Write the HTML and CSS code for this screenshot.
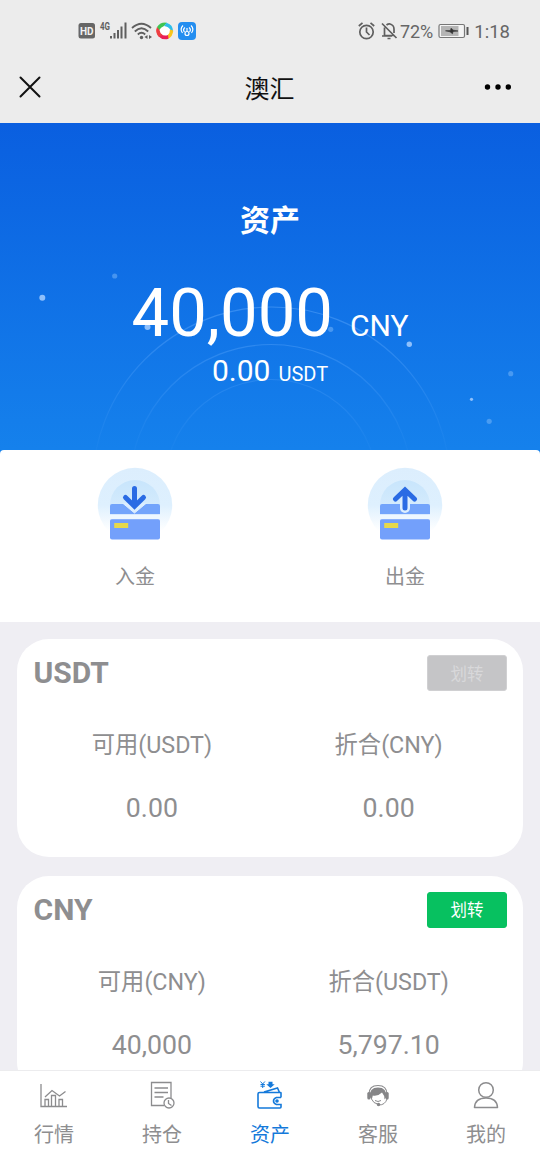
FILE: index.html
```html
<!DOCTYPE html>
<html lang="zh-CN">
<head>
<meta charset="utf-8">
<title>澳汇</title>
<link rel="stylesheet" href="styles.css">
</head>
<body>
<div class="screen">
  <header class="status">
    <div class="status-left">
      <svg width="118" height="22" viewBox="0 0 118 22">
        <rect x="0.500" y="3" width="16.500" height="15.500" rx="2.500" fill="#666"/>
        <text x="8.800" y="14.600" class="hd">HD</text>
        <text x="22" y="10" class="g4" textLength="10" lengthAdjust="spacingAndGlyphs">4G</text>
        <g fill="#5f5f5f"><rect x="32" y="16" width="2" height="2.500"/><rect x="35.500" y="13" width="2" height="5.500"/><rect x="39" y="10" width="2" height="8.500"/><rect x="42.500" y="6.500" width="2" height="12"/><rect x="46.500" y="2.500" width="2" height="16"/></g>
        <g fill="none" stroke="#5f5f5f" stroke-width="1.800"><path d="M54 8Q63.500-.5 73 8M56.800 11.500Q63.500 5 70.200 11.500M59.800 14.500Q63.500 11 67.200 14.500"/></g>
        <circle cx="63.500" cy="17.500" r="1.700" fill="#5f5f5f"/>
        <path d="M66.500 17l3-2v4zM74 17l-3-2v4z" fill="#5f5f5f"/>
        <circle cx="86.700" cy="11" r="8.500" fill="#fff"/>
        <path d="M79 7Q83 1.500 89 2.800L86 6Q83 7 80.500 11z" fill="#3fc453"/>
        <path d="M88.500 2.700Q95 4.500 95.200 11.500L92.500 10Q90.500 6.500 86 6z" fill="#2ebde9"/>
        <path d="M95.200 10.500Q95 17 89.500 19L89.800 15Q92 13.500 92 9.500z" fill="#f8c51c"/>
        <path d="M90.500 18.700Q84.500 20.500 80.500 16.500L83 14Q86 16.500 90 15z" fill="#e91e55"/>
        <path d="M81 17Q76.500 12.500 79 7L81.500 10Q82 13.500 84.500 15z" fill="#ed3f42"/>
        <rect x="100" y="2" width="18" height="18" rx="4" fill="#248ef0"/>
        <g fill="none" stroke="#fff" stroke-width="1.200"><circle cx="109" cy="13.500" r="2"/><path d="M106.500 12Q104.500 9.500 107 7.500M111.500 12Q113.500 9.500 111 7.500M104.500 13Q101.500 9 105 5.500M113.500 13Q116.500 9 113 5.500M109 8v3"/></g>
      </svg>
    </div>
    <div class="status-right">
      <svg width="40" height="22" viewBox="0 0 40 22" fill="none" stroke="#5f5f5f" stroke-width="1.700">
        <circle cx="8.500" cy="12" r="6.700"/><path d="M8.500 7.500V12l3 3M.8 6L4.500 2.800M16.200 6L12.500 2.800"/>
        <path d="M24 3.500L38.500 18M26.500 7.500v8h10M24 16h10M28.500 5Q30 3.800 31.500 3.800Q36 5 36 9v4M29.500 18.500h3"/>
      </svg>
      <span class="pct">72%</span>
      <svg width="32" height="16" viewBox="0 0 32 16">
        <rect x="1" y="1.500" width="25.500" height="13" rx="1.500" fill="#f4f4f4" stroke="#777" stroke-width="1.200"/>
        <rect x="3" y="3" width="17.500" height="10" fill="#b5b5b5"/>
        <path d="M7.500 7.800l5 -.3.500-2.300 2.500 2 4.500.8-5 .5-.5 2.300-2.500-2z" fill="#333" stroke="#333" stroke-width=".6"/>
        <rect x="28.500" y="4" width="2" height="8" fill="#555"/>
      </svg>
      <span class="time">1:18</span>
    </div>
  </header>
  <nav class="titlebar">
    <svg width="22" height="22" viewBox="0 0 22 22" stroke="#111" stroke-width="2" stroke-linecap="round"><path d="M1.500 1.500l19 19M20.500 1.500l-19 19"/></svg>
    <h1>澳汇</h1>
    <svg width="28" height="8" viewBox="0 0 28 8"><circle cx="3.500" cy="4" r="2.700"/><circle cx="14" cy="4" r="2.700"/><circle cx="24.300" cy="4" r="2.700"/></svg>
  </nav>
  <section class="hero">
    <svg class="hero-art" width="540" height="327" viewBox="0 123 540 327">
      <defs><linearGradient id="fade" gradientUnits="userSpaceOnUse" x1="0" y1="307" x2="0" y2="448"><stop offset="0" stop-color="#6ab0ff" stop-opacity=".42"/><stop offset="1" stop-color="#6ab0ff" stop-opacity=".05"/></linearGradient></defs>
      <g fill="none" stroke="url(#fade)" stroke-width="1.200"><circle cx="271.500" cy="486" r="179"/><circle cx="271" cy="485.500" r="141"/><circle cx="271" cy="485.500" r="106"/></g>
      <g fill="#8fc0fb"><circle cx="42.300" cy="297.800" r="3"/><circle cx="147.500" cy="327" r="3"/><circle cx="409.300" cy="344.300" r="2.700"/><circle cx="471.500" cy="399.300" r="1.600"/></g>
      <g fill="#7db9fa" fill-opacity=".5"><circle cx="114.700" cy="276" r="2.600"/><circle cx="330.700" cy="329.300" r="2.600"/><circle cx="510.700" cy="373.700" r="2.600"/><circle cx="489.200" cy="421.300" r="2.600"/></g>
    </svg>
    <h2>资产</h2>
    <div class="total"><span class="amount">40,000</span><span class="unit">CNY</span></div>
    <div class="sub"><span class="sub-amount">0.00</span><span class="sub-unit">USDT</span></div>
  </section>
  <section class="actions-wrap">
    <div class="actions">
      <a class="action">
        <svg width="76" height="76" viewBox="0 0 76 76">
          <defs><linearGradient id="halo" x1="0" y1="0" x2="0" y2="1"><stop offset="0" stop-color="#dceefd"/><stop offset=".5" stop-color="#def0fe"/><stop offset=".85" stop-color="#fff"/></linearGradient><linearGradient id="core" x1="0" y1="0" x2="0" y2="1"><stop offset="0" stop-color="#c8e5fc"/><stop offset=".7" stop-color="#d8edfd"/></linearGradient></defs>
          <circle cx="38" cy="38" r="37.200" fill="url(#halo)"/><circle cx="38" cy="38" r="25" fill="url(#core)"/>
          <path d="M15 37q-2 0-2 2v8.500h50V39q0-2-2-2z" fill="#73a4fb"/>
          <rect x="13" y="52" width="50" height="20.500" rx="2" fill="#73a0fb"/><rect x="13" y="47.300" width="50" height="4.900" fill="#eef7ff"/>
          <rect x="17.200" y="56" width="14" height="5" fill="#e6d84b"/>
          <path d="M25.500 36L37.500 46L49.500 36" fill="#dceeff" stroke="#dceeff"/>
          <path d="M37.500 21.500v17M28.500 30.500l9 8.800 9-8.800" fill="none" stroke="#2a6be4" stroke-width="5" stroke-linecap="round"/>
        </svg>
        <span>入金</span>
      </a>
      <a class="action">
        <svg width="76" height="76" viewBox="0 0 76 76">
          <circle cx="38" cy="38" r="37.200" fill="url(#halo)"/><circle cx="38" cy="38" r="25" fill="url(#core)"/>
          <path d="M15 37q-2 0-2 2v8.500h50V39q0-2-2-2z" fill="#73a4fb"/>
          <rect x="13" y="52" width="50" height="20.500" rx="2" fill="#73a0fb"/><rect x="13" y="47.300" width="50" height="4.900" fill="#eef7ff"/>
          <rect x="17.200" y="56" width="14" height="5" fill="#e6d84b"/>
          <path d="M38 34v7" stroke="#dceeff" stroke-width="10" stroke-linecap="round"/>
          <path d="M38 23v18M28.500 32l9.500-9 9.500 9" fill="none" stroke="#2a6be4" stroke-width="5" stroke-linecap="round"/>
        </svg>
        <span>出金</span>
      </a>
    </div>
  </section>
  <main class="cards">
    <article class="card">
      <div class="card-head"><h3>USDT</h3><button class="btn disabled">划转</button></div>
      <div class="grid"><span class="label">可用(USDT)</span><span class="label">折合(CNY)</span><span class="value">0.00</span><span class="value">0.00</span></div>
    </article>
    <article class="card">
      <div class="card-head"><h3>CNY</h3><button class="btn">划转</button></div>
      <div class="grid"><span class="label">可用(CNY)</span><span class="label">折合(USDT)</span><span class="value">40,000</span><span class="value">5,797.10</span></div>
    </article>
  </main>
  <footer class="tabs">
    <a class="tab"><svg width="30" height="30" viewBox="0 0 30 30" fill="none" stroke="#8c8c8e" stroke-width="1.300"><path d="M2 4v22.500h26M6 26.500v-7h3.500v7M12.500 26.500v-11h4v11M20 26.500v-7h3.500v7M6 17l7-6.500 7.500 5.500 6-4.500"/></svg><span>行情</span></a>
    <a class="tab"><svg width="30" height="30" viewBox="0 0 30 30" fill="none" stroke="#8c8c8e" stroke-width="1.300"><path d="M17 25.500H4.500v-23h19.500v15.500M7.500 8h13.500M7.500 12.500h13.500M7.500 17h9"/><circle cx="22" cy="23" r="5"/><path d="M21.500 20v3.500l3 2"/></svg><span>持仓</span></a>
    <a class="tab active"><svg width="30" height="30" viewBox="0 0 30 30" fill="none" stroke="#1479da" stroke-width="1.600"><path d="M26 17.500v-4.500Q26 12.500 25.500 12.500H4.500Q3 12.500 3 14v12.500Q3 28 4.500 28h20.500q1 0 1-1v-2.500h-4.500q-3-1-3-3.500t3-3.500h4.500M9 12l13.500-4 1.800 4"/><circle cx="22" cy="21" r="1" fill="#1479da"/><path d="M5.500 1.500l2.200 2.500 2.200-2.500M7.700 4v4M5.500 4.500h4.400M5.500 6.200h4.400" stroke-width="1"/><path d="M13.500 1.800h4v2.500h2.200l-4.200 3.700-4.200-3.700h2.200z" fill="#1479da" stroke="none"/></svg><span>资产</span></a>
    <a class="tab"><svg width="30" height="30" viewBox="0 0 30 30"><path d="M6 14.500Q6 5.500 15 5.500t9 9" fill="none" stroke="#8c8c8e" stroke-width="1.200"/><path d="M6.800 17Q6 7.500 15 7.500t8.300 9.500l-1.800 2.500Q21.500 15 19 12.500Q15 16.500 9.800 15.500L8.800 19.500z" fill="#858587"/><rect x="4.300" y="12" width="3.200" height="7.500" rx="1.600" fill="#858587"/><rect x="22.500" y="12" width="3.200" height="7.500" rx="1.600" fill="#858587"/><path d="M8.500 19q2 4.500 6 5M24 19q-2 6-8 6M12 20.500q3 2 6 0" fill="none" stroke="#8c8c8e"/><circle cx="15.500" cy="24.500" r="1.700" fill="#858587"/></svg><span>客服</span></a>
    <a class="tab"><svg width="30" height="30" viewBox="0 0 30 30" fill="none" stroke="#8c8c8e" stroke-width="1.500"><circle cx="15" cy="10" r="7.300"/><path d="M3.500 27.500q.5-9.500 11.500-9.500t11.500 9.500z" stroke-linejoin="round"/></svg><span>我的</span></a>
  </footer>
</div>
</body>
</html>
```
FILE: styles.css
```css
* { box-sizing: border-box; margin: 0; padding: 0; }
body { font-family: Roboto, "Noto Sans CJK SC", sans-serif; color: #8e8e90; background: #efeef3; }
svg { display: block; flex: none; }
.screen { width: 540px; height: 1155px; display: flex; flex-direction: column; overflow: hidden; }

.status { flex: none; height: 62px; background: #ececec; display: flex; justify-content: space-between; align-items: center; padding: 0 30px 0 78px; }
.status-left, .status-right { display: flex; align-items: center; }
.hd { font-size: 10px; font-weight: 700; fill: #f2f2f2; text-anchor: middle; }
.g4 { font-size: 10px; font-weight: 700; fill: #5f5f5f; }
.pct { font-size: 18px; color: #666; margin: 1px 5px 0 2px; }
.time { font-size: 18.500px; color: #666; margin: 1px 0 0 4px; }

.titlebar { flex: none; height: 61px; background: #ececec; display: flex; justify-content: space-between; align-items: center; padding: 0 28px 11px 19px; }
.titlebar h1 { font-size: 25px; line-height: 34px; font-weight: 400; color: #111; padding: 5px 0 0 14px; }

.hero { flex: none; height: 327px; position: relative; background: linear-gradient(#0a5fe0, #1581ec); color: #fff; padding-top: 76px; text-align: center; }
.hero-art { position: absolute; left: 0; top: 0; }
.hero h2, .total, .sub { position: relative; }
.hero h2 { font-size: 30px; line-height: 44px; font-weight: 700; }
.total { display: flex; justify-content: center; align-items: baseline; gap: 17px; height: 81px; margin-top: 30px; line-height: 80px; }
.amount { font-size: 67px; }
.unit { font-size: 30px; }
.sub { display: flex; justify-content: center; align-items: baseline; gap: 8px; line-height: 34px; }
.sub-amount { font-size: 30px; }
.sub-unit { font-size: 20px; }

.actions-wrap { flex: none; background: #1581ec; }
.actions { height: 172px; background: #fff; border-radius: 4px 4px 0 0; display: flex; padding-top: 17px; }
.action { flex: 1; display: flex; flex-direction: column; align-items: center; gap: 19px; font-size: 20px; line-height: 30px; }

.cards { flex: 1; min-height: 0; overflow: hidden; padding: 17px 17px 0; display: flex; flex-direction: column; gap: 19px; }
.card { flex: none; height: 218px; background: #fff; border-radius: 32px; padding: 16px 16px 0 16.500px; }
.card-head { display: flex; justify-content: space-between; align-items: center; height: 36px; }
.card h3 { font-size: 30px; line-height: 36px; font-weight: 700; }
.btn { width: 80px; height: 36px; border: 1px solid #07c05f; border-radius: 3px; background: #07c160; color: #fff; font: 400 16.500px/33px Roboto, "Noto Sans CJK SC", sans-serif; }
.btn.disabled { background: #c5c5c7; border-color: #d0d0d2; color: #d8d8da; padding-top: 2px; }
.grid { display: grid; grid-template-columns: 1fr 1fr; text-align: center; padding-top: 35.500px; row-gap: 27px; }
.label { font-size: 23.300px; line-height: 36px; }
.value { font-size: 26.700px; line-height: 36px; }

.tabs { flex: none; height: 85px; background: #fff; border-top: 1px solid #ececee; display: flex; padding-top: 9px; }
.tab { flex: 1; display: flex; flex-direction: column; align-items: center; gap: 10px; font-size: 20px; line-height: 30px; }
.tab.active { color: #1479da; }
```
